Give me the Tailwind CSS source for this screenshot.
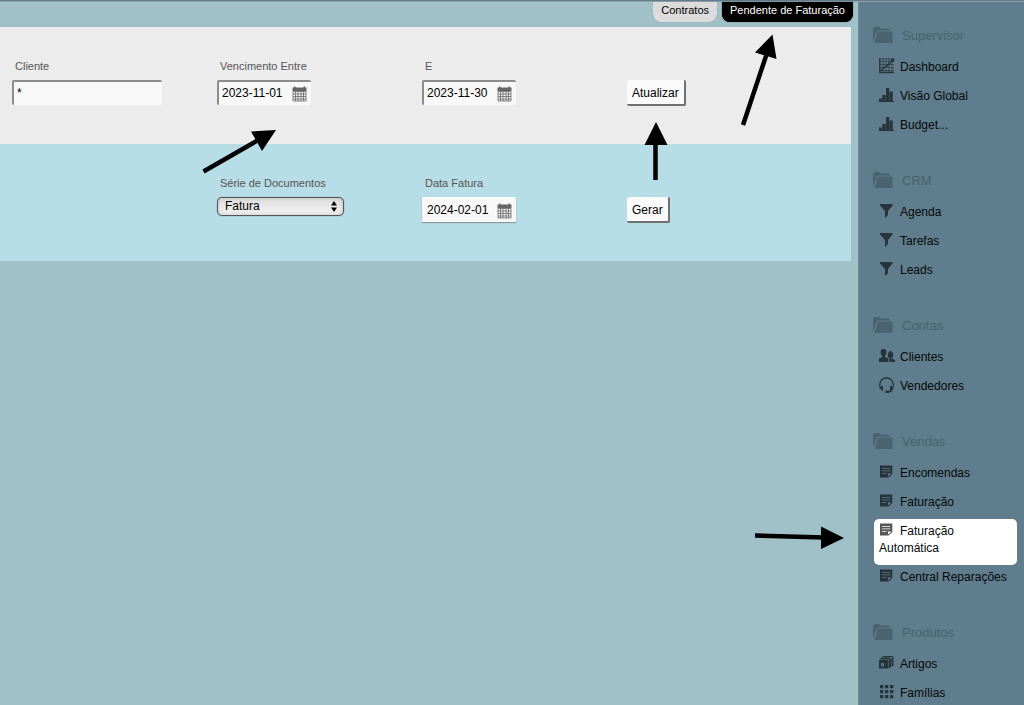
<!DOCTYPE html>
<html lang="pt">
<head>
  <meta charset="UTF-8" />
  <meta name="viewport" content="width=device-width, initial-scale=1.0"/>
  <title>Faturação Automática</title>
  <script src="https://cdn.jsdelivr.net/npm/@tailwindcss/browser@4"></script>
</head>
<body class="bg-[#a0c1c8] font-['Liberation_Sans',Arial,sans-serif] text-xs text-black">
  <!-- icon sprites -->
  <svg class="hidden" aria-hidden="true">
    <symbol id="i-folder" viewBox="0 0 20 18">
      <path d="M0 15V3.500L1.500 1H6L7.500 2.500H15Q17 2.500 17 4.500H5.500Q4 4.500 3.500 6L0.500 15Z"/>
      <path d="M5.500 5.500H19.500V17H1.500L4.500 6.500Q4.800 5.500 5.500 5.500Z"/>
    </symbol>
    <symbol id="i-graph" viewBox="0 0 16 16">
      <path d="M1 1H15M1 3.500H15M1 6.500H15M1 9.500H15M1 12.500H15M4 0V15M7 0V15M10 0V15M13 0V15" fill="none" stroke="currentColor" stroke-width=".6"/>
      <path d="M.8 0V14.500H15" fill="none" stroke="currentColor" stroke-width="1.400"/>
      <path d="M2 12.500L5 9.500L8 8L11 4.500L14 2" fill="none" stroke="currentColor" stroke-width="1.500"/>
      <circle cx="14" cy="2" r="1.500"/>
    </symbol>
    <symbol id="i-bars" viewBox="0 0 16 16">
      <path d="M0 11.500H3V15H0ZM3.300 8H6.700V15H3.300ZM7 1H10.200V15H7ZM10.500 4.500H13.700V15H10.500ZM0 14H15V15H0Z"/>
    </symbol>
    <symbol id="i-funnel" viewBox="0 0 16 16">
      <path d="M1 1H13.500V2.500L9 8V12L6 15V8L1 2.500Z"/>
    </symbol>
    <symbol id="i-people" viewBox="0 0 16 16">
      <path d="M1.500 4Q1.500 1 4.500 1Q7.500 1 7.500 4Q7.500 6.500 6 8V9L9.500 10.500V14H0V10.500L3 9V8Q1.500 6.500 1.500 4Z"/>
      <path d="M9 9.500Q8.500 8 9 5.500Q9.400 3 11.500 3Q13.600 3 14 5.500Q14.500 8 14 9.500H12.500V10.500L16 12V14H10.500V10L10 9.500Z"/>
    </symbol>
    <symbol id="i-headset" viewBox="0 0 16 16">
      <path d="M1.500 12C-.5 6 2 1 7.500 1S15.500 6 13.500 12L12 14.500H9" fill="none" stroke="currentColor" stroke-width="1.300"/>
      <path d="M2 9H4V14H3.200L2 12.500ZM11 9H13V12.500L11.800 14H11ZM6.500 13.500H10V16H6.500Z"/>
    </symbol>
    <symbol id="i-note" viewBox="0 0 16 16">
      <path fill-rule="evenodd" d="M1 1.500H13.300V10L9.500 13.500H1ZM3 4V4.700H11.300V4ZM3 6.500V7.200H11.300V6.500ZM3 9V9.700H7.500V9ZM9 9.500V12.500L12.500 9.500Z"/>
    </symbol>
    <symbol id="i-box" viewBox="0 0 16 16">
      <path fill-rule="evenodd" d="M0 5H9.500V13.500H0ZM2 8V11.500H5V8ZM3.300 8H3.700V11.500H3.300Z"/>
      <path d="M0.500 4.500L2.500 2.500H12L10 4.500ZM10 5L12 3.500V12L10 13.500ZM3 2L4.500 1H14.500L13 2ZM12.500 3L14.500 1.500V10.500L12.500 12Z"/>
    </symbol>
    <symbol id="i-grid" viewBox="0 0 16 16">
      <path d="M1 1H4.300V4.300H1ZM6 1H9.300V4.300H6ZM11 1H14.300V4.300H11ZM1 6H4.300V9.300H1ZM6 6H9.300V9.300H6ZM11 6H14.300V9.300H11ZM1 11H4.300V14.300H1ZM6 11H9.300V14.300H6ZM11 11H14.300V14.300H11Z"/>
    </symbol>
    <symbol id="i-calendar" viewBox="0 0 16 16">
      <path d="M.5 1.500H2V.5H3.500V1.500H11.500V.5H13V1.500H14.500V5H.5Z"/>
      <path d="M1 5.500H14V15H1ZM1 8H14M1 10.500H14M1 13H14M3.500 5.500V15M6 5.500V15M9 5.500V15M11.500 5.500V15" fill="none" stroke="currentColor" stroke-width=".8"/>
    </symbol>
  </svg>

  <div class="relative flex h-screen flex-col overflow-hidden">
    <div class="h-[2px] shrink-0 border-b border-[#8fa0a8] bg-[#5f7d8c]"></div>

    <div class="flex min-h-0 flex-1">
      <main class="min-w-0 flex-1">
        <nav class="flex h-[25px] items-start justify-end gap-[5px] pr-[5px] text-[11px]">
          <a href="#" class="h-5 rounded-b-lg bg-[#dcdcdc] px-2 leading-[17px] shadow-[0_0_1px_#777]">Contratos</a>
          <a href="#" class="h-5 rounded-b-lg bg-black px-2 leading-[17px] text-white shadow-[0_0_1px_#000]">Pendente de Faturação</a>
        </nav>

        <form class="mr-[7px]">
          <div class="grid h-[117px] grid-cols-[repeat(3,205px)_1fr] items-start bg-[#ececec] pt-[31px] pl-3">
            <div>
              <label for="cliente" class="block pl-[3px] text-[11px] leading-4 text-[#555]">Cliente</label>
              <input id="cliente" type="text" value="*" class="mt-[6px] block h-[25px] w-[150px] rounded-xs border-t-2 border-l-2 border-[#8c8c8c] bg-[#f8f8f8] px-[3px] pb-[2px]">
            </div>
            <div>
              <label for="de" class="block pl-[3px] text-[11px] leading-4 text-[#555]">Vencimento Entre</label>
              <div class="mt-[6px] flex h-[25px] w-[94px] items-center rounded-xs border-t-2 border-l-2 border-[#8c8c8c] bg-[#f8f8f8]">
                <input id="de" type="text" value="2023-11-01" class="w-[73px] pb-[2px] pl-[3px]">
                <button type="button" aria-label="Calendário" class="text-[#666]"><svg class="size-4 fill-current"><use href="#i-calendar"/></svg></button>
              </div>
            </div>
            <div>
              <label for="ate" class="block pl-[3px] text-[11px] leading-4 text-[#555]">E</label>
              <div class="mt-[6px] flex h-[25px] w-[94px] items-center rounded-xs border-t-2 border-l-2 border-[#8c8c8c] bg-[#f8f8f8]">
                <input id="ate" type="text" value="2023-11-30" class="w-[73px] pb-[2px] pl-[3px]">
                <button type="button" aria-label="Calendário" class="text-[#666]"><svg class="size-4 fill-current"><use href="#i-calendar"/></svg></button>
              </div>
            </div>
            <div class="pt-[22px]">
              <button type="button" class="h-[26px] rounded-xs border-r-2 border-b-2 border-[#707070] bg-[#fafafa] px-[5px] pt-[2px]">Atualizar</button>
            </div>
          </div>

          <div class="grid h-[117px] grid-cols-[repeat(3,205px)_1fr] items-start bg-[#b7dde6] pt-[31px] pl-3">
            <div class="col-start-2">
              <label for="serie" class="block pl-[3px] text-[11px] leading-4 text-[#555]">Série de Documentos</label>
              <div class="relative mt-[6px] w-[127px]">
                <select id="serie" class="block h-[19px] w-full appearance-none rounded-[5px] border border-[#555] bg-linear-to-b from-[#dedede] to-[#f4f4f4] pb-[2px] pl-[7px] shadow-[0_0_1px_#555,inset_0_0_4px_#bbb]">
                  <option>Fatura</option>
                </select>
                <svg class="pointer-events-none absolute top-1 right-[7px] h-[11px] w-[6px]" viewBox="0 0 6 11"><path d="M3 0L6 4.500H0ZM3 11L6 6.500H0Z"/></svg>
              </div>
            </div>
            <div>
              <label for="data" class="block pl-[3px] text-[11px] leading-4 text-[#555]">Data Fatura</label>
              <div class="mt-[6px] flex h-[25px] w-[94px] items-center bg-[#f8f8f8] pt-[2px] pl-[2px] shadow-[0_1px_1px_#8a9a9e]">
                <input id="data" type="text" value="2024-02-01" class="w-[73px] pb-[2px] pl-[3px]">
                <button type="button" aria-label="Calendário" class="text-[#666]"><svg class="size-4 fill-current"><use href="#i-calendar"/></svg></button>
              </div>
            </div>
            <div class="pt-[22px]">
              <button type="button" class="h-[26px] rounded-xs border-r-2 border-b-2 border-[#707070] bg-[#fafafa] px-[5px] pt-[2px]">Gerar</button>
            </div>
          </div>
        </form>
      </main>

      <aside class="w-[166px] overflow-hidden border-l border-[#6d8b97] bg-[#5f7d8c] pt-5 pr-[7px] pl-[15px] leading-[17px] text-[#060809]">
        <section class="mb-[25px]">
          <h2 class="-ml-px flex h-[33px] gap-[9px] pt-1 text-[13px] leading-5 text-[#496371]"><svg class="h-[18px] w-5 fill-current"><use href="#i-folder"/></svg>Supervisor</h2>
          <a href="#" class="block pt-1 pb-2 pl-[5px]"><svg class="-mt-1 mr-[5px] inline size-4 fill-current align-[-3px] text-[#27343b]"><use href="#i-graph"/></svg>Dashboard</a>
          <a href="#" class="block pt-1 pb-2 pl-[5px]"><svg class="-mt-1 mr-[5px] inline size-4 fill-current align-[-3px] text-[#27343b]"><use href="#i-bars"/></svg>Visão Global</a>
          <a href="#" class="block pt-1 pb-2 pl-[5px]"><svg class="-mt-1 mr-[5px] inline size-4 fill-current align-[-3px] text-[#27343b]"><use href="#i-bars"/></svg>Budget...</a>
        </section>
        <section class="mb-[25px]">
          <h2 class="-ml-px flex h-[33px] gap-[9px] pt-1 text-[13px] leading-5 text-[#496371]"><svg class="h-[18px] w-5 fill-current"><use href="#i-folder"/></svg>CRM</h2>
          <a href="#" class="block pt-1 pb-2 pl-[5px]"><svg class="-mt-1 mr-[5px] inline size-4 fill-current align-[-3px] text-[#27343b]"><use href="#i-funnel"/></svg>Agenda</a>
          <a href="#" class="block pt-1 pb-2 pl-[5px]"><svg class="-mt-1 mr-[5px] inline size-4 fill-current align-[-3px] text-[#27343b]"><use href="#i-funnel"/></svg>Tarefas</a>
          <a href="#" class="block pt-1 pb-2 pl-[5px]"><svg class="-mt-1 mr-[5px] inline size-4 fill-current align-[-3px] text-[#27343b]"><use href="#i-funnel"/></svg>Leads</a>
        </section>
        <section class="mb-[25px]">
          <h2 class="-ml-px flex h-[33px] gap-[9px] pt-1 text-[13px] leading-5 text-[#496371]"><svg class="h-[18px] w-5 fill-current"><use href="#i-folder"/></svg>Contas</h2>
          <a href="#" class="block pt-1 pb-2 pl-[5px]"><svg class="-mt-1 mr-[5px] inline size-4 fill-current align-[-3px] text-[#27343b]"><use href="#i-people"/></svg>Clientes</a>
          <a href="#" class="block pt-1 pb-2 pl-[5px]"><svg class="-mt-1 mr-[5px] inline size-4 fill-current align-[-3px] text-[#27343b]"><use href="#i-headset"/></svg>Vendedores</a>
        </section>
        <section class="mb-[25px]">
          <h2 class="-ml-px flex h-[33px] gap-[9px] pt-1 text-[13px] leading-5 text-[#496371]"><svg class="h-[18px] w-5 fill-current"><use href="#i-folder"/></svg>Vendas</h2>
          <a href="#" class="block pt-1 pb-2 pl-[5px]"><svg class="-mt-1 mr-[5px] inline size-4 fill-current align-[-3px] text-[#27343b]"><use href="#i-note"/></svg>Encomendas</a>
          <a href="#" class="block pt-1 pb-2 pl-[5px]"><svg class="-mt-1 mr-[5px] inline size-4 fill-current align-[-3px] text-[#27343b]"><use href="#i-note"/></svg>Faturação</a>
          <a href="#" aria-current="page" class="block rounded-[5px] bg-white pt-1 pr-6 pb-2 pl-[5px]"><svg class="-mt-1 mr-[5px] inline size-4 fill-current align-[-3px] text-[#555]"><use href="#i-note"/></svg>Faturação Automática</a>
          <a href="#" class="block pt-1 pb-2 pl-[5px] whitespace-nowrap"><svg class="-mt-1 mr-[5px] inline size-4 fill-current align-[-3px] text-[#27343b]"><use href="#i-note"/></svg>Central Reparações</a>
        </section>
        <section>
          <h2 class="-ml-px flex h-[33px] gap-[9px] pt-1 text-[13px] leading-5 text-[#496371]"><svg class="h-[18px] w-5 fill-current"><use href="#i-folder"/></svg>Produtos</h2>
          <a href="#" class="block pt-1 pb-2 pl-[5px]"><svg class="-mt-1 mr-[5px] inline size-4 fill-current align-[-3px] text-[#27343b]"><use href="#i-box"/></svg>Artigos</a>
          <a href="#" class="block pt-1 pb-2 pl-[5px]"><svg class="-mt-1 mr-[5px] inline size-4 fill-current align-[-3px] text-[#27343b]"><use href="#i-grid"/></svg>Famílias</a>
        </section>
      </aside>
    </div>

    <!-- annotation arrows -->
    <svg class="pointer-events-none absolute top-0 left-0 h-[705px] w-[1024px]" viewBox="0 0 1024 705" stroke="#000">
      <path d="M203.500 171.500L260 139M743 125L767 53M655.500 180V142M755 535.500L824 537.500" fill="none" stroke-width="4.500"/>
      <path d="M276 130L251 131.500L262 151ZM772.500 34.500L755 52.500L776.500 59ZM656 122L644.500 145H667.500ZM844 538L821 526.500V549Z" stroke="none"/>
    </svg>
  </div>
</body>
</html>
